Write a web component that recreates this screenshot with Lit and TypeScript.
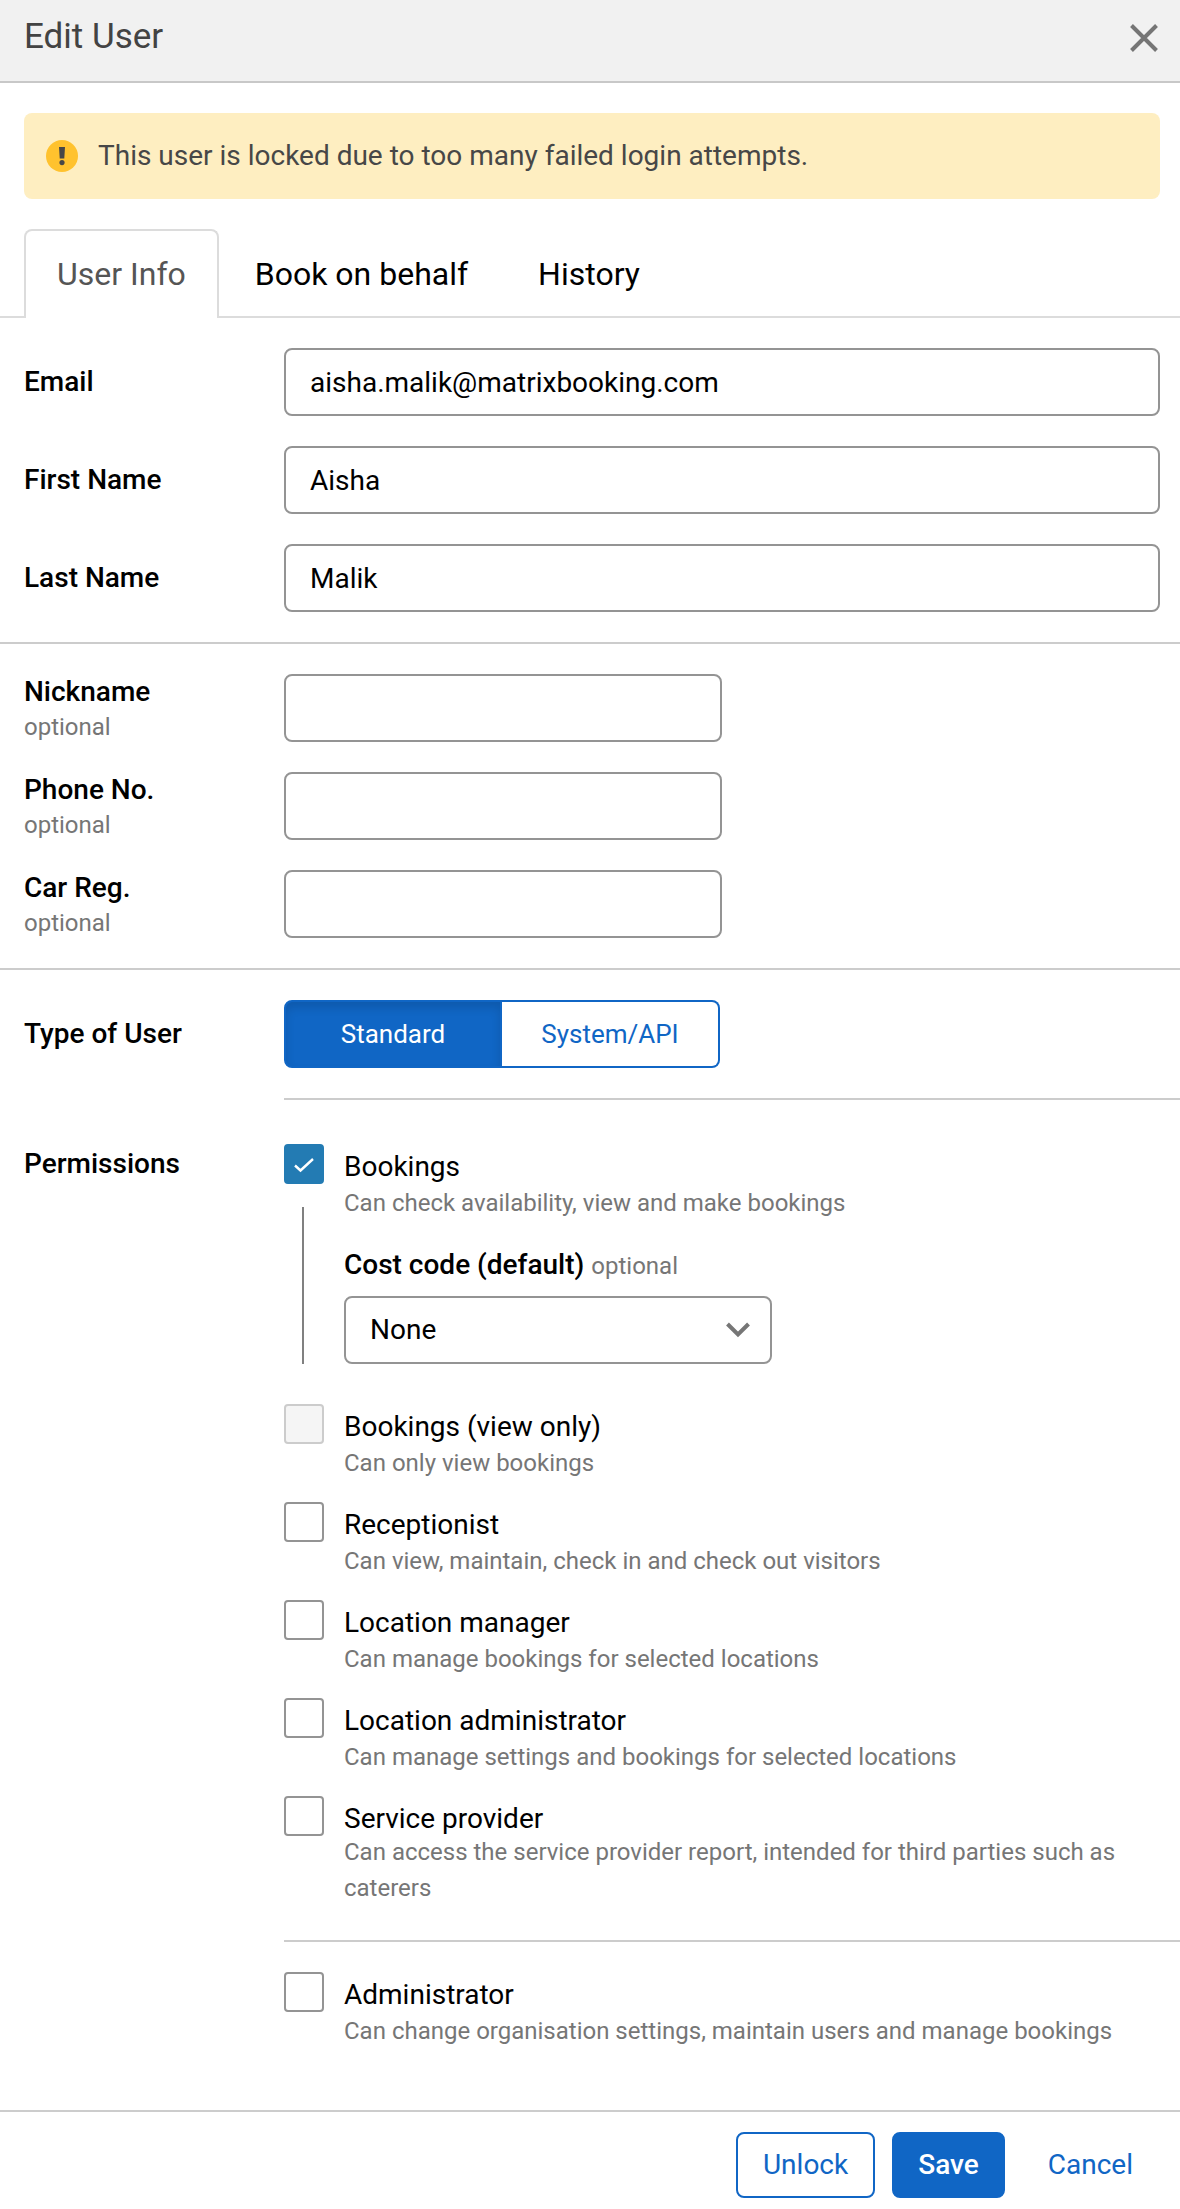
import { LitElement, html, css, svg, nothing } from "lit";
import { customElement, state } from "lit/decorators.js";
import { classMap } from "lit/directives/class-map.js";

interface Field {
  id: string;
  label: string;
  value: string;
  type: string;
}

interface Permission {
  id: string;
  title: string;
  description: string;
  checked?: boolean;
  disabled?: boolean;
  costCode?: boolean;
  long?: boolean;
}

const NAME_FIELDS: Field[] = [
  { id: "email", label: "Email", value: "aisha.malik@matrixbooking.com", type: "email" },
  { id: "first-name", label: "First Name", value: "Aisha", type: "text" },
  { id: "last-name", label: "Last Name", value: "Malik", type: "text" },
];

const OPTIONAL_FIELDS: Field[] = [
  { id: "nickname", label: "Nickname", value: "", type: "text" },
  { id: "phone", label: "Phone No.", value: "", type: "tel" },
  { id: "car-reg", label: "Car Reg.", value: "", type: "text" },
];

const PERMISSIONS: Permission[] = [
  {
    id: "bookings",
    title: "Bookings",
    description: "Can check availability, view and make bookings",
    checked: true,
    costCode: true,
  },
  {
    id: "bookings-view",
    title: "Bookings (view only)",
    description: "Can only view bookings",
    disabled: true,
  },
  {
    id: "receptionist",
    title: "Receptionist",
    description: "Can view, maintain, check in and check out visitors",
  },
  {
    id: "location-manager",
    title: "Location manager",
    description: "Can manage bookings for selected locations",
  },
  {
    id: "location-admin",
    title: "Location administrator",
    description: "Can manage settings and bookings for selected locations",
  },
  {
    id: "service-provider",
    title: "Service provider",
    description:
      "Can access the service provider report, intended for third parties such as caterers",
    long: true,
  },
];

const ADMINISTRATOR: Permission = {
  id: "administrator",
  title: "Administrator",
  description: "Can change organisation settings, maintain users and manage bookings",
};

const TABS = ["User Info", "Book on behalf", "History"];
const USER_TYPES = ["Standard", "System/API"];

@customElement("app-root")
export class AppRoot extends LitElement {
  @state() private activeTab = TABS[0];
  @state() private userType = USER_TYPES[0];

  static styles = css`
    :host {
      display: block;
      background: #fff;
      color: #000;
      font-family: Roboto, "Liberation Sans", sans-serif;
      font-size: 28px;
      line-height: 34px;
    }
    * {
      box-sizing: border-box;
    }
    button,
    input,
    select {
      font: inherit;
      color: inherit;
      margin: 0;
    }
    button {
      cursor: pointer;
    }
    svg {
      display: block;
    }
    .header {
      display: flex;
      justify-content: space-between;
      align-items: flex-start;
      padding: 16px 20px 23px 24px;
      background: #f1f1f1;
      border-bottom: 2px solid #c8c8c8;
    }
    .title {
      margin: 0;
      font-size: 35px;
      font-weight: 400;
      line-height: 42px;
      color: #434343;
    }
    .close {
      padding: 6px 0 4px;
      border: 0;
      background: none;
    }
    .alert {
      display: flex;
      align-items: center;
      gap: 20px;
      margin: 30px 20px 30px 24px;
      padding: 26px 22px;
      border-radius: 8px;
      background: #feeec1;
      color: #474747;
    }
    .tabs {
      display: flex;
      gap: 2px;
      padding-left: 24px;
      border-bottom: 2px solid #dcdcdc;
    }
    .tab {
      margin-bottom: -2px;
      padding: 24px 32px 25px;
      border: 2px solid transparent;
      border-bottom: 0;
      border-radius: 8px 8px 0 0;
      background: none;
      font-size: 32px;
      line-height: 38px;
    }
    .tab.active {
      padding: 24px 31px 25px;
      background: #fff;
      border-color: #dcdcdc;
      color: #555;
    }
    .section {
      display: grid;
      gap: 30px;
      padding: 30px 20px 30px 24px;
      border-bottom: 2px solid #ccc;
    }
    .section.compact {
      gap: 27px;
      padding-bottom: 27px;
    }
    .row {
      display: grid;
      grid-template-columns: 260px minmax(0, 1fr);
    }
    .label {
      padding-top: 17px;
      font-weight: 500;
    }
    .label.tall {
      padding-top: 1px;
    }
    .label.group {
      padding-top: 3px;
    }
    .optional {
      display: block;
      font-size: 24px;
      font-weight: 400;
      line-height: 36px;
      color: #767676;
    }
    .input {
      display: block;
      width: 100%;
      height: 68px;
      padding: 0 24px;
      border: 2px solid #949494;
      border-radius: 8px;
      background: #fff;
    }
    .input.half {
      width: 50%;
    }
    .setup {
      display: grid;
      padding: 30px 0 0 24px;
    }
    .choice {
      padding-bottom: 30px;
      border-bottom: 2px solid #ccc;
    }
    .segment {
      display: grid;
      grid-template-columns: 1fr 1fr;
      width: 436px;
      max-width: 100%;
      height: 68px;
    }
    .segment-button {
      border: 2px solid #1066c5;
      background: #fff;
      color: #1066c5;
      font-size: 26px;
    }
    .segment-button:first-child {
      border-radius: 8px 0 0 8px;
    }
    .segment-button:last-child {
      border-radius: 0 8px 8px 0;
      border-left: 0;
    }
    .segment-button.on {
      background: #1066c5;
      color: #fff;
      box-shadow: inset 0 6px 10px rgba(0, 0, 0, 0.12);
    }
    .permissions {
      margin-top: 44px;
    }
    .list {
      display: grid;
      gap: 18px;
    }
    .permission {
      display: grid;
      grid-template-columns: 40px minmax(0, 1fr);
      column-gap: 20px;
      padding-right: 20px;
    }
    .permission.with-code {
      margin-bottom: 22px;
    }
    .marker {
      display: flex;
      flex-direction: column;
      align-items: center;
    }
    .box {
      display: grid;
      place-items: center;
    }
    .box > * {
      grid-area: 1 / 1;
    }
    .checkbox {
      appearance: none;
      width: 40px;
      height: 40px;
      border: 2px solid #949494;
      border-radius: 4px;
      background: #fff;
    }
    .checkbox:disabled {
      border-color: #ccc;
      background: #f5f5f5;
    }
    .checkbox:checked {
      border-color: #237bb3;
      background: #237bb3;
    }
    .tick {
      visibility: hidden;
      pointer-events: none;
    }
    .checkbox:checked + .tick {
      visibility: visible;
    }
    .rail {
      flex: 1;
      width: 2px;
      margin: 23px 2px 0 0;
      background: #808080;
    }
    .name {
      display: block;
      padding-top: 8px;
      line-height: 30px;
    }
    .description {
      margin: 0;
      font-size: 24px;
      line-height: 42px;
      color: #767676;
    }
    .description.long {
      line-height: 36px;
    }
    .code-label {
      display: block;
      margin: 24px 0 14px;
      font-weight: 500;
    }
    .code-label .optional {
      display: inline;
      line-height: 32px;
    }
    .select-wrap {
      display: grid;
      align-items: center;
      width: 428px;
      max-width: 100%;
    }
    .select-wrap > * {
      grid-area: 1 / 1;
    }
    .select {
      appearance: none;
    }
    .chevron {
      justify-self: end;
      margin-right: 21px;
      pointer-events: none;
    }
    .admin {
      margin-top: 34px;
      padding: 30px 0 58px;
      border-top: 2px solid #ccc;
    }
    .footer {
      display: flex;
      justify-content: flex-end;
      gap: 17px;
      padding: 20px 21px 11px;
      border-top: 2px solid #ccc;
    }
    .button {
      height: 66px;
      padding: 0 24px;
      border: 2px solid transparent;
      border-radius: 8px;
      background: #fff;
      color: #1066c5;
    }
    .button.outline {
      padding: 0 25px;
      border-color: #1066c5;
    }
    .button.primary {
      background: #1066c5;
      border-color: #1066c5;
      color: #fff;
      font-weight: 500;
    }
  `;

  private renderField(field: Field, optional: boolean) {
    return html`
      <div class="row">
        <label class=${classMap({ label: true, tall: optional })} for=${field.id}>
          ${field.label}${optional ? html`<span class="optional">optional</span>` : nothing}
        </label>
        <div>
          <input
            class=${classMap({ input: true, half: optional })}
            id=${field.id}
            type=${field.type}
            .value=${field.value}
          />
        </div>
      </div>
    `;
  }

  private renderCostCode() {
    return html`
      <label class="code-label" for="cost-code"
        >Cost code (default) <span class="optional">optional</span></label
      >
      <div class="select-wrap">
        <select class="input select" id="cost-code">
          <option>None</option>
        </select>
        <svg class="chevron" width="26" height="18" viewBox="0 0 26 18" aria-hidden="true">
          <path d="M2.5 3 L13 13.5 L23.5 3" fill="none" stroke="#767676" stroke-width="4" />
        </svg>
      </div>
    `;
  }

  private renderPermission(item: Permission) {
    return html`
      <div class=${classMap({ permission: true, "with-code": !!item.costCode })}>
        <div class="marker">
          <div class="box">
            <input
              class="checkbox"
              type="checkbox"
              id=${item.id}
              .checked=${!!item.checked}
              ?disabled=${!!item.disabled}
            />
            <svg class="tick" width="40" height="40" viewBox="0 0 40 40" aria-hidden="true">
              ${svg`<path d="M11 21.5 L16.5 26.5 L29 15" fill="none" stroke="#fff" stroke-width="2.4" />`}
            </svg>
          </div>
          ${item.costCode ? html`<div class="rail"></div>` : nothing}
        </div>
        <div>
          <label class="name" for=${item.id}>${item.title}</label>
          <p class=${classMap({ description: true, long: !!item.long })}>${item.description}</p>
          ${item.costCode ? this.renderCostCode() : nothing}
        </div>
      </div>
    `;
  }

  render() {
    return html`
      <header class="header">
        <h1 class="title">Edit User</h1>
        <button class="close" type="button" aria-label="Close">
          <svg width="32" height="32" viewBox="0 0 32 32" aria-hidden="true">
            <path d="M3.5 3.5 L28.5 28.5 M28.5 3.5 L3.5 28.5" stroke="#757575" stroke-width="4" />
          </svg>
        </button>
      </header>

      <div class="alert" role="alert">
        <svg width="32" height="32" viewBox="0 0 32 32" aria-hidden="true">
          <circle cx="16" cy="16" r="16" fill="#ffc22e" />
          <path d="M13 7 H19 L18.3 18.5 H13.7 Z" fill="#474747" />
          <circle cx="16" cy="22.6" r="2.6" fill="#474747" />
        </svg>
        <span>This user is locked due to too many failed login attempts.</span>
      </div>

      <div class="tabs" role="tablist">
        ${TABS.map(
          (tab) => html`
            <button
              class=${classMap({ tab: true, active: tab === this.activeTab })}
              type="button"
              role="tab"
              aria-selected=${tab === this.activeTab}
              @click=${() => (this.activeTab = tab)}
            >${tab}</button>
          `
        )}
      </div>

      <form @submit=${(e: Event) => e.preventDefault()}>
        <div class="section">${NAME_FIELDS.map((f) => this.renderField(f, false))}</div>
        <div class="section compact">${OPTIONAL_FIELDS.map((f) => this.renderField(f, true))}</div>

        <div class="setup">
          <div class="row">
            <span class="label" id="user-type-label">Type of User</span>
            <div class="choice">
              <div class="segment" role="group" aria-labelledby="user-type-label">
                ${USER_TYPES.map(
                  (type) => html`
                    <button
                      class=${classMap({ "segment-button": true, on: type === this.userType })}
                      type="button"
                      aria-pressed=${type === this.userType}
                      @click=${() => (this.userType = type)}
                    >${type}</button>
                  `
                )}
              </div>
            </div>
          </div>

          <div class="row permissions" role="group" aria-labelledby="permissions-label">
            <span class="label group" id="permissions-label">Permissions</span>
            <div>
              <div class="list">${PERMISSIONS.map((p) => this.renderPermission(p))}</div>
              <div class="admin">${this.renderPermission(ADMINISTRATOR)}</div>
            </div>
          </div>
        </div>

        <footer class="footer">
          <button class="button outline" type="button">Unlock</button>
          <button class="button primary" type="submit">Save</button>
          <button class="button" type="button">Cancel</button>
        </footer>
      </form>
    `;
  }
}
